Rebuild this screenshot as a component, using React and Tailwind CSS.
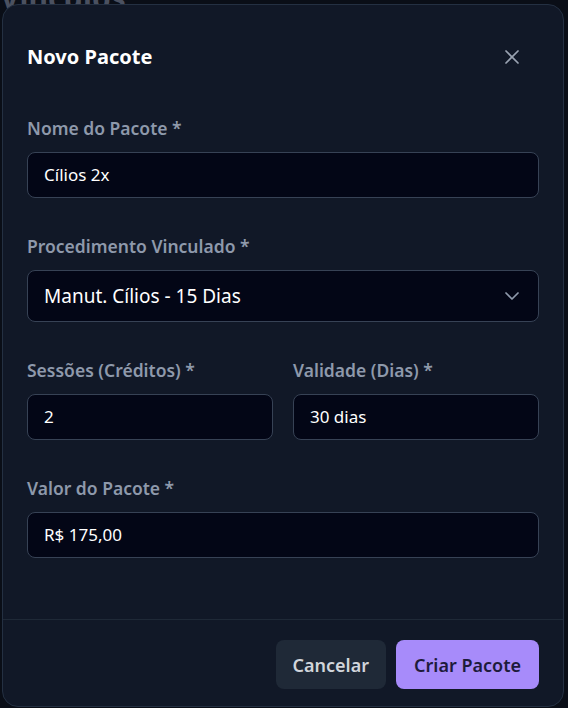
import React from 'react';
import { X, ChevronDown } from 'lucide-react';

function Field({ label, children }) {
  return (
    <div className="flex flex-col">
      <label className="mb-3 text-[17.5px] font-semibold leading-6 text-[#8e99ab]">{label}</label>
      {children}
    </div>
  );
}

function TextInput({ value }) {
  return (
    <div className="flex h-[46px] items-center rounded-lg border border-[#374255] bg-[#030616] px-4 text-[17px] text-white">
      {value}
    </div>
  );
}

export default function App() {
  return (
    <div className="relative h-[708px] w-[568px] overflow-hidden bg-[#0a0e17] font-['Noto_Sans',sans-serif]">
      {/* page behind the dialog */}
      <div className="absolute -top-[20px] left-0 text-3xl font-bold text-[#4b5160]">Vínculos</div>

      <div className="relative ml-[2px] mt-[4px] flex h-[703px] w-[562px] flex-col rounded-2xl border border-[#243042] bg-[#111827]">
        {/* Header */}
        <div className="flex items-center justify-between px-6 pt-[38px]">
          <h2 className="text-xl font-bold leading-7 text-white">Novo Pacote</h2>
          <button className="mr-[15px] text-[#9aa3b2]">
            <X size={24} strokeWidth={1.75} />
          </button>
        </div>

        {/* Body */}
        <div className="flex flex-1 flex-col gap-[36px] px-6 pt-[45px]">
          <Field label="Nome do Pacote *">
            <TextInput value="Cílios 2x" />
          </Field>

          <Field label="Procedimento Vinculado *">
            <div className="flex h-[52px] items-center justify-between rounded-lg border border-[#374255] bg-[#030616] pl-4 pr-[14px] text-[19px] text-white">
              <span>Manut. Cílios - 15 Dias</span>
              <ChevronDown size={24} strokeWidth={1.75} className="text-[#8e99ab]" />
            </div>
          </Field>

          <div className="grid grid-cols-2 gap-5">
            <Field label="Sessões (Créditos) *">
              <TextInput value="2" />
            </Field>
            <Field label="Validade (Dias) *">
              <TextInput value="30 dias" />
            </Field>
          </div>

          <Field label="Valor do Pacote *">
            <TextInput value="R$ 175,00" />
          </Field>
        </div>

        {/* Footer */}
        <div className="flex justify-end gap-2.5 border-t border-[#1f2937] pb-[17px] pl-6 pr-[24px] pt-5">
          <button className="h-[49px] rounded-lg bg-[#1f2937] px-[17px] text-lg font-semibold text-[#d1d5db]">
            Cancelar
          </button>
          <button className="h-[49px] rounded-lg bg-[#a78bfa] px-[18px] text-lg font-semibold text-[#1e1b3b]">
            Criar Pacote
          </button>
        </div>
      </div>
    </div>
  );
}
